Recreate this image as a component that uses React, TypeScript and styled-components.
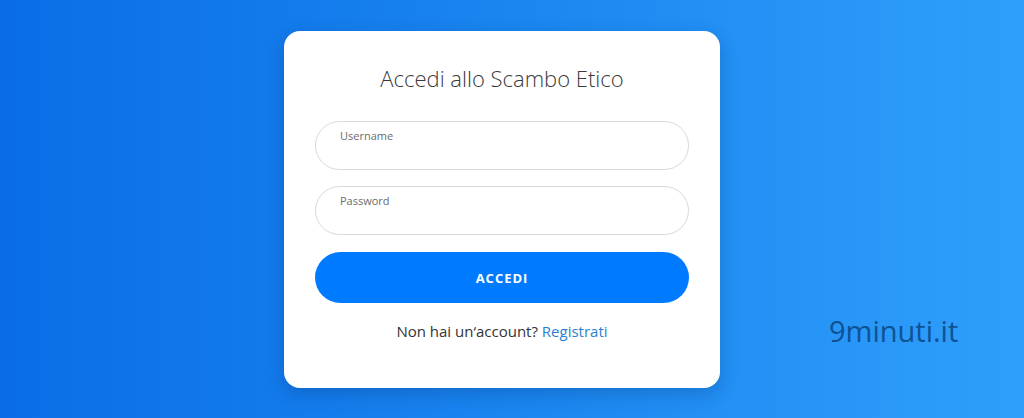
import React from 'react';
import styled, { createGlobalStyle } from 'styled-components';

const GlobalStyle = createGlobalStyle`
  html, body {
    margin: 0;
    padding: 0;
  }
  body {
    font-family: 'Open Sans', 'Noto Sans', sans-serif;
  }
`;

const Page = styled.div`
  position: relative;
  width: 1024px;
  height: 418px;
  overflow: hidden;
  background: linear-gradient(90deg, #0a6de6 0%, #1a86f0 50%, #2f9ffb 100%);
  padding: 31px 0 0 284px;
  box-sizing: border-box;
`;

const Card = styled.div`
  width: 436px;
  height: 357px;
  background: #fff;
  border-radius: 16px;
  box-shadow: 0 6px 18px rgba(0, 40, 100, 0.25);
  box-sizing: border-box;
  padding: 32px 31px 0;
  display: flex;
  flex-direction: column;
  align-items: stretch;
`;

const Title = styled.h1`
  margin: 0 0 28px;
  text-align: center;
  font-weight: 300;
  font-size: 22px;
  line-height: 30px;
  color: #3a3a3a;
`;

const Field = styled.div`
  height: 49px;
  border: 1px solid #d9d9d9;
  border-radius: 25px;
  box-sizing: border-box;
  padding: 6px 24px 0;
  margin-bottom: 16px;
`;

const Label = styled.label`
  display: block;
  font-size: 11px;
  line-height: 16px;
  color: #6b6b6b;
`;

const Input = styled.input`
  display: block;
  width: 100%;
  border: none;
  outline: none;
  background: transparent;
  font: inherit;
  font-size: 14px;
  padding: 2px 0;
`;

const Button = styled.button`
  height: 51px;
  border: none;
  border-radius: 26px;
  background: #007bff;
  color: #fff;
  font-family: inherit;
  font-weight: 700;
  font-size: 13px;
  letter-spacing: 1px;
  cursor: pointer;
  margin-top: 1px;
`;

const Footer = styled.p`
  margin: 18px 0 0;
  text-align: center;
  font-size: 15px;
  color: #333;
`;

const Link = styled.a`
  color: #2b7fd1;
  text-decoration: none;
`;

const Watermark = styled.div`
  position: absolute;
  left: 829px;
  top: 311px;
  font-family: 'Open Sans', 'Noto Sans', sans-serif;
  font-size: 29px;
  line-height: 40px;
  color: #0c4b88;
  opacity: 0.9;
`;

export default function App() {
  return (
    <>
      <GlobalStyle />
      <Page>
        <Card>
          <Title>Accedi allo Scambo Etico</Title>
          <Field>
            <Label htmlFor="username">Username</Label>
            <Input id="username" type="text" />
          </Field>
          <Field>
            <Label htmlFor="password">Password</Label>
            <Input id="password" type="password" />
          </Field>
          <Button>ACCEDI</Button>
          <Footer>
            Non hai un‘account? <Link href="#">Registrati</Link>
          </Footer>
        </Card>
        <Watermark>9minuti.it</Watermark>
      </Page>
    </>
  );
}
